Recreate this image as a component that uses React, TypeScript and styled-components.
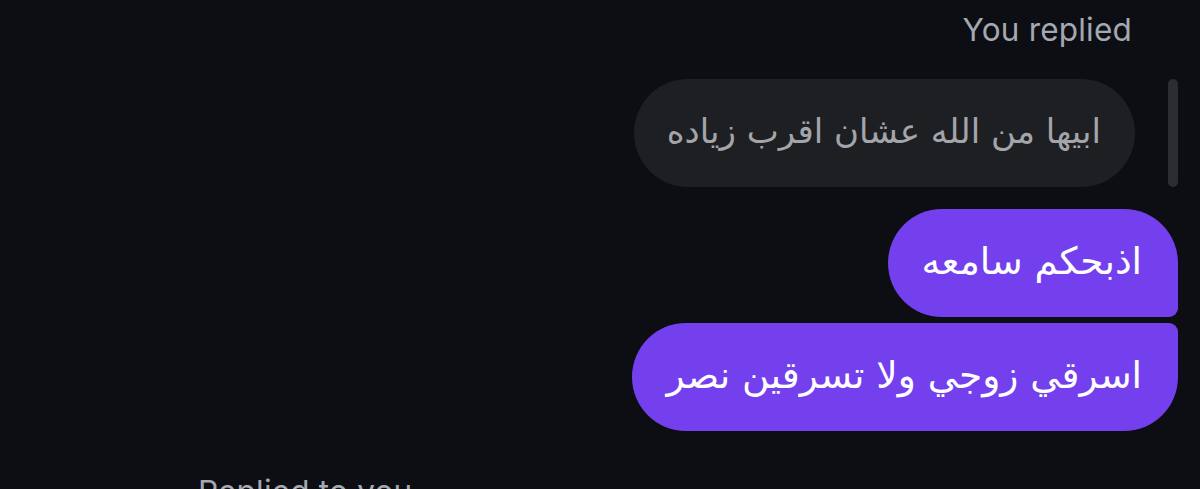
import styled, { createGlobalStyle } from 'styled-components'

const GlobalStyle = createGlobalStyle`
	html, body {
		margin: 0;
		padding: 0;
		background: #0c0e13;
		overflow: hidden;
	}
`

const messages = ['اذبحكم سامعه', 'اسرقي زوجي ولا تسرقين نصر']

export default function App() {
	return (
		<>
			<GlobalStyle />
			<Thread>
				<Label align="right">You replied</Label>
				<ReplyRow>
					<ReplyBubble dir="rtl">ابيها من الله عشان اقرب زياده</ReplyBubble>
					<ReplyBar />
				</ReplyRow>
				<Group>
					{messages.map((text, i) => (
						<Bubble
							key={i}
							dir="rtl"
							first={i === 0}
							last={i === messages.length - 1}
						>
							{text}
						</Bubble>
					))}
				</Group>
				<Label align="left">Replied to you</Label>
			</Thread>
		</>
	)
}

const Thread = styled.div`
	display: flex;
	flex-direction: column;
	height: 489px;
	padding: 10px 22px 0 198px;
	box-sizing: border-box;
	font-family: Inter, 'DejaVu Sans', sans-serif;
`

const Label = styled.div<{ align: 'left' | 'right' }>`
	align-self: ${({ align }) => (align === 'right' ? 'flex-end' : 'flex-start')};
	margin-right: ${({ align }) => (align === 'right' ? '46px' : '0')};
	margin-top: ${({ align }) => (align === 'right' ? '0' : '41px')};
	font-size: 31.5px;
	line-height: 40px;
	color: #a4a8b1;
	letter-spacing: 0.2px;
`

const ReplyRow = styled.div`
	display: flex;
	justify-content: flex-end;
	align-items: stretch;
	gap: 33px;
	margin-top: 29px;
`

const ReplyBubble = styled.div`
	display: flex;
	align-items: center;
	height: 108px;
	padding: 0 34px 4px 33px;
	box-sizing: border-box;
	border-radius: 54px;
	background: #1d1f23;
	color: #a4a5aa;
	font-family: 'DejaVu Sans', sans-serif;
	font-size: 34px;
`

const ReplyBar = styled.div`
	width: 10px;
	border-radius: 5px;
	background: #2b2d32;
`

const Group = styled.div`
	display: flex;
	flex-direction: column;
	align-items: flex-end;
	gap: 6px;
	margin-top: 22px;
`

const Bubble = styled.div<{ first: boolean; last: boolean }>`
	display: flex;
	align-items: center;
	height: 108px;
	padding: 0 36px 4px 34px;
	box-sizing: border-box;
	border-radius: 54px;
	border-top-right-radius: ${({ first }) => (first ? '54px' : '9px')};
	border-bottom-right-radius: ${({ last }) => (last ? '54px' : '9px')};
	background: #7440ee;
	color: #ffffff;
	font-family: 'DejaVu Sans', sans-serif;
	font-size: 37.5px;
`
